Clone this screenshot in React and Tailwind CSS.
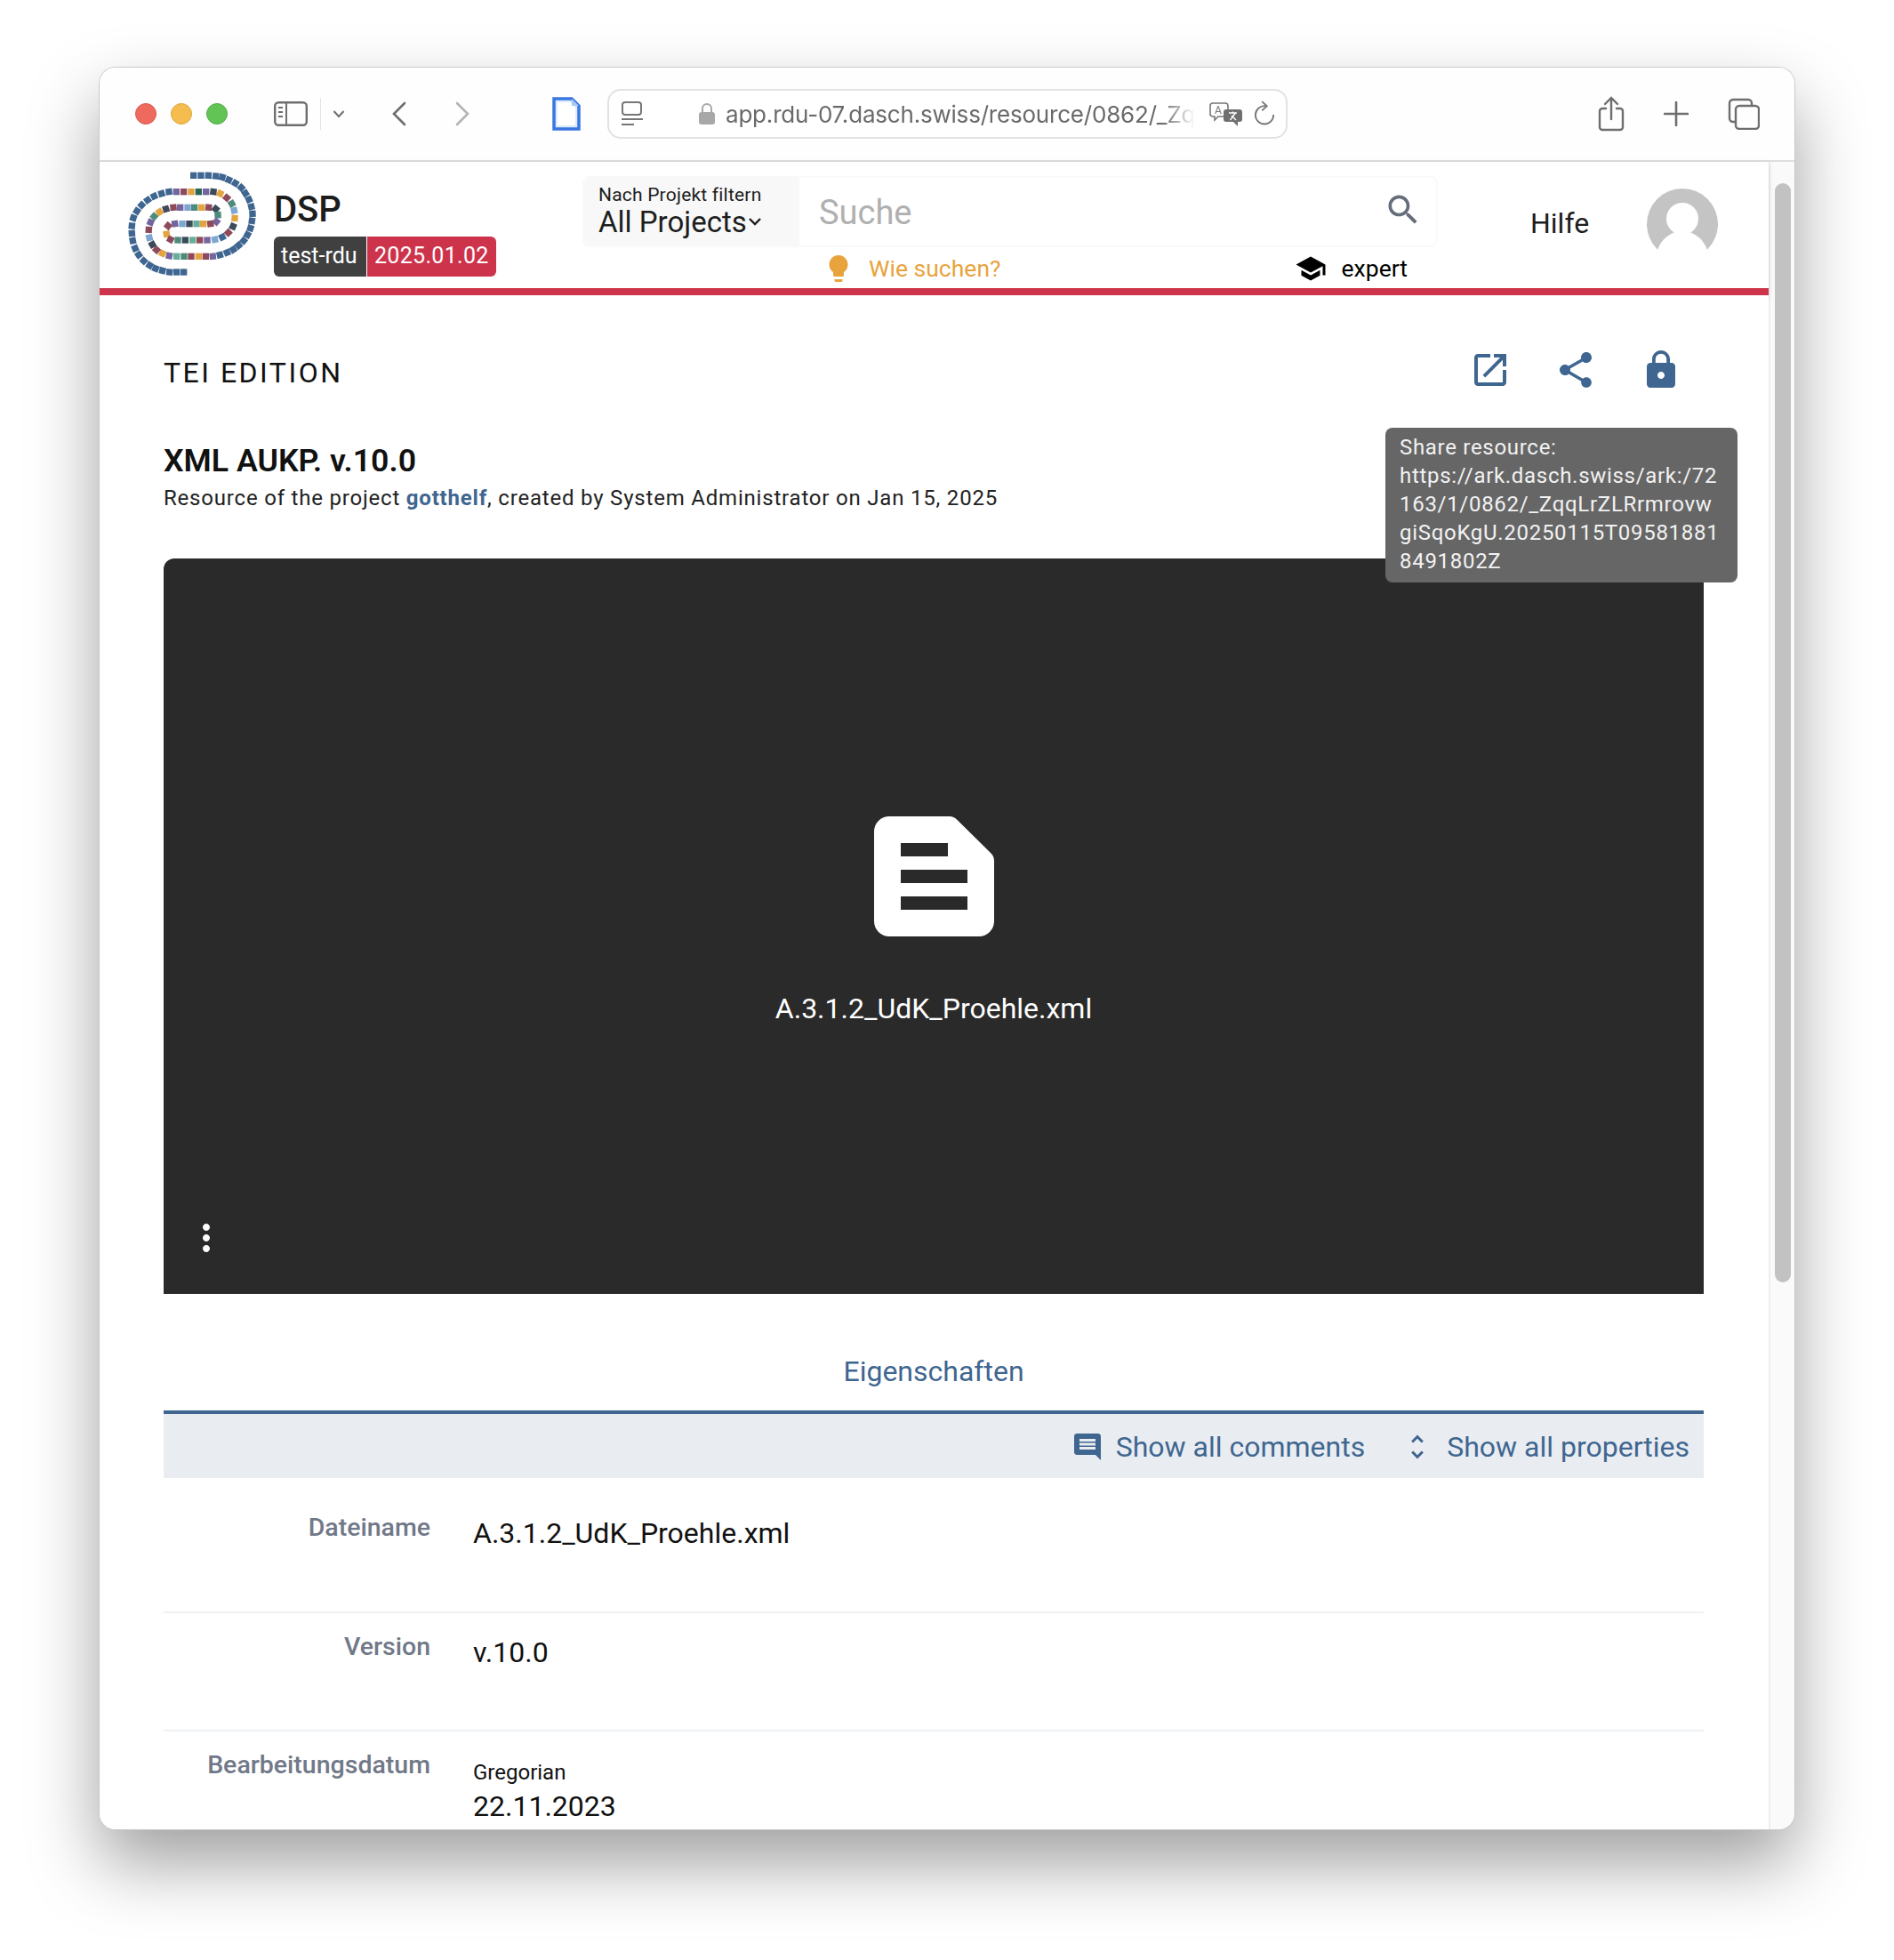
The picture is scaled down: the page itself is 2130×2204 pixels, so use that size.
import React from "react";

const B = "#3f6690", P = "#75659e", M = "#8e4a5a", A = "#e3a33f", G = "#2a6655", T = "#4d8a7b", L = "#7ea6d2", S = "#3c4a5a", F = "#68ac9a";

// squares of the logo, in order along the spiral
const SPIRAL = [
  [263,52,B],[288,52,B],[313,52,B],[338,54,B],[360,58,B],[382,67,B],[404,78,B],[424,93,B],[438,112,B],[450,133,B],[458,157,B],[462,181,B],[460,205,B],[455,230,B],[445,252,B],[432,272,B],[415,288,B],[397,302,B],[376,312,B],[352,320,B],
  [328,325,P],[304,325,M],[280,325,A],[255,325,M],[231,325,T],[206,325,F],[181,323,P],[158,315,A],[138,303,M],[124,285,S],[114,262,L],[112,235,M],[118,210,P],[130,190,T],[148,175,A],[170,165,S],
  [195,160,M],[218,160,P],[243,160,L],[266,160,T],[290,160,A],[314,160,M],[338,165,S],[345,185,T],[340,208,P],[320,215,M],[296,215,A],[273,215,F],[249,215,S],[225,215,L],[200,215,P],[177,222,M],[172,250,A],[185,268,M],
  [210,270,T],[235,270,S],[260,270,F],[284,270,M],[309,270,P],[335,268,L],[360,260,B],[380,245,M],[396,224,S],[402,196,A],[400,170,L],[392,147,T],[375,127,M],[353,113,A],[330,107,S],[305,107,P],[280,107,G],[255,107,A],[230,107,M],[205,107,P],
  [180,107,B],[155,113,B],[130,122,B],[108,135,B],[88,152,B],[72,172,B],[60,195,B],[55,222,B],[55,247,B],[58,272,B],[66,298,B],[78,320,B],[95,340,B],[115,355,B],[135,366,B],[158,373,B],[182,378,B],[206,378,B],[230,378,B],
];

const Logo = () => (
  <svg viewBox="30 30 450 360" className="w-[150px] h-[120px] shrink-0">
    {SPIRAL.map(([x, y, c], i) => {
      const a = SPIRAL[Math.max(i - 1, 0)];
      const b = SPIRAL[Math.min(i + 1, SPIRAL.length - 1)];
      const deg = (Math.atan2(b[1] - a[1], b[0] - a[0]) * 180) / Math.PI;
      return <rect key={i} x={x - 11} y={y - 11} width="22" height="22" fill={c} transform={`rotate(${deg} ${x} ${y})`} />;
    })}
  </svg>
);

const Mat = ({ d, className }) => (
  <svg viewBox="0 0 24 24" fill="currentColor" className={className}><path d={d} /></svg>
);

const ICONS = {
  open: "M19 19H5V5h7V3H5c-1.11 0-2 .9-2 2v14c0 1.1.89 2 2 2h14c1.1 0 2-.9 2-2v-7h-2v7zM14 3v2h3.59l-9.83 9.83 1.41 1.41L19 6.41V10h2V3h-7z",
  share: "M18 16.08c-.76 0-1.44.3-1.96.77L8.91 12.7c.05-.23.09-.46.09-.7s-.04-.47-.09-.7l7.05-4.11c.54.5 1.25.81 2.04.81 1.66 0 3-1.34 3-3s-1.34-3-3-3-3 1.34-3 3c0 .24.04.47.09.7L8.04 9.81C7.5 9.31 6.79 9 6 9c-1.66 0-3 1.34-3 3s1.34 3 3 3c.79 0 1.5-.31 2.04-.81l7.12 4.16c-.05.21-.08.43-.08.65 0 1.61 1.31 2.92 2.92 2.92s2.92-1.31 2.92-2.92-1.31-2.92-2.92-2.92z",
  lock: "M18 8h-1V6c0-2.76-2.24-5-5-5S7 3.24 7 6v2H6c-1.1 0-2 .9-2 2v10c0 1.1.9 2 2 2h12c1.1 0 2-.9 2-2V10c0-1.1-.9-2-2-2zm-6 9c-1.1 0-2-.9-2-2s.9-2 2-2 2 .9 2 2-.9 2-2 2zm3.1-9H8.9V6c0-1.71 1.39-3.1 3.1-3.1 1.71 0 3.1 1.39 3.1 3.1v2z",
  search: "M15.5 14h-.79l-.28-.27C15.41 12.59 16 11.11 16 9.5 16 5.91 13.09 3 9.5 3S3 5.91 3 9.5 5.91 16 9.5 16c1.61 0 3.09-.59 4.23-1.57l.27.28v.79l5 4.99L20.49 19l-4.99-5zm-6 0C7.01 14 5 11.99 5 9.5S7.01 5 9.5 5 14 7.01 14 9.5 11.99 14 9.5 14z",
  bulb: "M9 21c0 .55.45 1 1 1h4c.55 0 1-.45 1-1v-1H9v1zm3-19C8.14 2 5 5.14 5 9c0 2.38 1.19 4.47 3 5.74V17c0 .55.45 1 1 1h6c.55 0 1-.45 1-1v-2.26c1.81-1.27 3-3.36 3-5.74 0-3.86-3.14-7-7-7z",
  school: "M5 13.18v4L12 21l7-3.82v-4L12 17l-7-3.82zM12 3L1 9l11 6 9-4.91V17h2V9L12 3z",
  comment: "M21.99 4c0-1.1-.89-2-1.99-2H4c-1.1 0-2 .9-2 2v12c0 1.1.9 2 2 2h14l4 4-.01-18zM18 14H6v-2h12v2zm0-3H6V9h12v2zm0-3H6V6h12v2z",
  unfold: "M12 5.83L15.17 9l1.41-1.41L12 3 7.41 7.59 8.83 9 12 5.83zm0 12.34L8.83 15l-1.41 1.41L12 21l4.59-4.59L15.17 15 12 18.17z",
  more: "M12 8c1.1 0 2-.9 2-2s-.9-2-2-2-2 .9-2 2 .9 2 2 2zm0 2c-1.1 0-2 .9-2 2s.9 2 2 2 2-.9 2-2-.9-2-2-2zm0 6c-1.1 0-2 .9-2 2s.9 2 2 2 2-.9 2-2-.9-2-2-2z",
};

const Toolbar = () => (
  <div className="h-[106px] shrink-0 flex items-center pl-[40px] bg-[#fefefe] border-b-2 border-[#dedede] text-[#6e6e6e]">
    <div className="flex gap-[16px]">
      <div className="w-[24px] h-[24px] rounded-full bg-[#ee6a5f] border border-[#d9574d]" />
      <div className="w-[24px] h-[24px] rounded-full bg-[#f5bd4f] border border-[#dfa63c]" />
      <div className="w-[24px] h-[24px] rounded-full bg-[#61c454] border border-[#52ad46]" />
    </div>
    <svg viewBox="0 0 38 28" fill="none" stroke="currentColor" strokeWidth="2.4" className="ml-[52px] w-[38px] h-[28px]">
      <rect x="1.2" y="1.2" width="35.6" height="25.600" rx="4" />
      <path d="M14 1v26M5 7h5M5 12h5M5 17h5" strokeWidth="2" />
    </svg>
    <div className="ml-[14px] w-px h-[36px] bg-[#e4e4e4]" />
    <svg viewBox="0 0 14 10" fill="none" stroke="currentColor" strokeWidth="2" className="ml-[13px] w-[14px] h-[10px]"><path d="M1.5 2 7 8l5.500-6" /></svg>
    <svg viewBox="0 0 16 28" fill="none" stroke="currentColor" strokeWidth="2.6" strokeLinecap="round" className="ml-[53px] w-[16px] h-[28px]"><path d="M14 2 2 14l12 12" /></svg>
    <svg viewBox="0 0 16 28" fill="none" stroke="#b4b4b4" strokeWidth="2.6" strokeLinecap="round" className="ml-[55px] w-[16px] h-[28px]"><path d="m2 2 12 12L2 26" /></svg>
    <svg viewBox="0 0 32 38" className="ml-[93px] w-[32px] h-[38px]">
      <path d="M2 2h20l8 8v26H2z" fill="#dcebff" stroke="#3a76e0" strokeWidth="3.500" />
      <path d="M6 6h14l6 6v20H6z" fill="#fff" />
      <path d="M22 2v8h8z" fill="#a9c9f7" />
    </svg>
    <div className="ml-[30px] w-[765px] h-[56px] flex items-center rounded-[15px] border-2 border-[#e2e2e2] bg-white">
      <svg viewBox="0 0 26 28" fill="none" stroke="#777" strokeWidth="2" className="ml-[13px] w-[26px] h-[28px] shrink-0">
        <rect x="2" y="1" width="21" height="14" rx="3" /><path d="M1 20h24M1 26h14" />
      </svg>
      <svg viewBox="0 0 18 24" fill="#a8a8a8" className="ml-[62px] w-[18px] h-[24px] shrink-0">
        <rect x="0" y="10" width="18" height="14" rx="3" />
        <path d="M4 11V6a5 5 0 0 1 10 0v5" fill="none" stroke="#a8a8a8" strokeWidth="2" />
      </svg>
      <div className="ml-[12px] w-[528px] overflow-hidden whitespace-nowrap font-['Inter',sans-serif] text-[26px] text-[#6a6a6a] tracking-[-0.2px] [mask-image:linear-gradient(to_right,black_93%,transparent)]">
        app.rdu-07.dasch.swiss/resource/0862/_Zq
      </div>
      <svg viewBox="0 0 38 27" className="ml-[16px] w-[38px] h-[27px] shrink-0">
        <path d="M4 1h14a3 3 0 0 1 3 3v9a3 3 0 0 1-3 3H10l-4 4v-4H4a3 3 0 0 1-3-3V4a3 3 0 0 1 3-3z" fill="#fff" stroke="#777" strokeWidth="1.600" />
        <text x="6" y="13" fontSize="12" fill="#777" fontFamily="Roboto, sans-serif">A</text>
        <rect x="16" y="8" width="21" height="14" rx="3" fill="#6f6f6f" />
        <path d="M32 22v5l-5-5z" fill="#6f6f6f" />
        <path d="M22 12h9M26.500 10.500v2M23.500 20l5.500-7.500M30 20l-5-5" stroke="#fff" strokeWidth="1.400" fill="none" />
      </svg>
      <svg viewBox="0 0 26 32" fill="none" stroke="#777" strokeWidth="2" className="ml-[12px] w-[24px] h-[30px] shrink-0">
        <path d="M14 6.500A11 11 0 1 0 24 17" /><path d="m10 1 6 5.500-6 5.500" />
      </svg>
    </div>
    <svg viewBox="0 0 30 40" fill="none" stroke="currentColor" strokeWidth="2.400" strokeLinecap="round" className="ml-[349px] w-[30px] h-[40px]">
      <path d="M9 14H5a3 3 0 0 0-3 3v18a3 3 0 0 0 3 3h20a3 3 0 0 0 3-3V17a3 3 0 0 0-3-3h-4M15 26V2M8 9l7-7 7 7" />
    </svg>
    <svg viewBox="0 0 28 28" fill="none" stroke="currentColor" strokeWidth="2.600" strokeLinecap="round" className="ml-[44px] w-[28px] h-[28px]"><path d="M14 1v26M1 14h26" /></svg>
    <svg viewBox="0 0 36 36" fill="none" stroke="currentColor" strokeWidth="2.400" className="ml-[44px] w-[36px] h-[36px]">
      <path d="M8 27H6a4 4 0 0 1-4-4V6a4 4 0 0 1 4-4h17a4 4 0 0 1 4 4v2" />
      <rect x="9" y="9" width="26" height="26" rx="4" />
    </svg>
  </div>
);

const Avatar = () => (
  <svg viewBox="0 0 80 80" className="w-[80px] h-[80px]">
    <circle cx="40" cy="40" r="40" fill="#c4c4c4" />
    <circle cx="40" cy="34" r="18" fill="#fff" />
    <path d="M12 69c4-12 15-21 28-21s24 9 28 21v11H12z" fill="#fff" />
  </svg>
);

const Header = () => (
  <div className="h-[150px] shrink-0 flex items-start border-b-8 border-[#cd344b] shadow-[0_2px_6px_rgba(0,0,0,0.12)] relative bg-white">
    <div className="ml-[28px] mt-[8px]"><Logo /></div>
    <div className="ml-[18px] mt-[32px] w-[250px] shrink-0">
      <div className="text-[40px] leading-[44px] font-medium text-[#1d1d1d]">DSP</div>
      <div className="mt-[8px] flex w-[250px] h-[45px] rounded-[6px] overflow-hidden text-[25px] leading-[44px] text-white whitespace-nowrap">
        <div className="w-[105px] shrink-0 bg-[#404040] pl-[8px] border-r border-white">test-rdu</div>
        <div className="flex-1 bg-[#cd344b] pl-[8px] tracking-[0.3px]">2025.01.02</div>
      </div>
    </div>
    <div className="ml-[97px] mt-[16px] w-[962px]">
      <div className="h-[80px] flex rounded-[8px] border-2 border-[#f9f9f9]">
        <div className="w-[242px] bg-[#f8f8f8] pl-[16px] pt-[6px] rounded-l-[8px]">
          <div className="text-[21px] leading-[26px] tracking-[0.2px] text-[#1d1d1d]">Nach Projekt filtern</div>
          <div className="flex items-center text-[33px] leading-[36px] text-[#1d1d1d]">
            All Projects
            <svg viewBox="0 0 14 10" fill="none" stroke="#1d1d1d" strokeWidth="2.400" className="ml-[1px] mt-[-2px] w-[16px] h-[10px]"><path d="M1 2l6 6 6-6" /></svg>
          </div>
        </div>
        <div className="flex-1 flex items-center pl-[22px] pt-[2px] text-[38px] text-[#b0b0b0]">Suche</div>
        <Mat d={ICONS.search} className="w-[44px] h-[44px] mt-[14px] mr-[15px] text-[#656c7a]" />
      </div>
      <div className="flex items-center h-[42px] mt-[3px]">
        <Mat d={ICONS.bulb} className="ml-[270px] w-[36px] h-[36px] text-[#e8a33d]" />
        <span className="ml-[16px] text-[26.500px] text-[#e8a33d]">Wie suchen?</span>
        <Mat d={ICONS.school} className="ml-[330px] w-[36px] h-[36px] text-black" />
        <span className="ml-[17px] text-[26.500px] text-black">expert</span>
      </div>
    </div>
    <div className="ml-[104px] mt-[47px] text-[32px] leading-[44px] text-[#1d1d1d]">Hilfe</div>
    <div className="ml-[65px] mt-[30px]"><Avatar /></div>
  </div>
);

const Row = ({ label, children, cls }) => (
  <div className={`flex border-b-2 border-[#eef1f4] ${cls}`}>
    <div className="w-[300px] text-right text-[28.500px] font-medium text-[#717888] leading-[36px]">{label}</div>
    <div className="ml-[48px] text-[32px] text-[#111] leading-[40px]">{children}</div>
  </div>
);

const Content = () => (
  <div className="flex-1 overflow-hidden relative bg-white">
    <div className="pl-[72px] pr-[73px]">
      <div className="flex items-center h-[40px] mt-[67px]">
        <div className="text-[32px] tracking-[2.500px] text-[#111]">TEI EDITION</div>
        <div className="ml-auto mb-[6px] flex items-center text-[#3f6690]">
          <Mat d={ICONS.open} className="w-[48px] h-[48px]" />
          <Mat d={ICONS.share} className="ml-[48px] w-[48px] h-[48px]" />
          <Mat d={ICONS.lock} className="ml-[48px] mr-[24px] w-[48px] h-[48px]" />
        </div>
      </div>
      <div className="mt-[57px] text-[35.700px] leading-[44px] font-semibold text-[#111]">XML AUKP. v.10.0</div>
      <div className="mt-[4px] text-[24px] leading-[32px] tracking-[0.8px] text-[#222]">
        Resource of the project <span className="font-bold text-[#3f6690]">gotthelf</span>, created by System Administrator on Jan 15, 2025
      </div>
      <div className="mt-[52px] h-[827px] bg-[#2a2a2a] rounded-t-[12px] flex flex-col items-center relative">
        <svg viewBox="0 0 135 135" className="mt-[290px] w-[135px] h-[135px]">
          <path fillRule="evenodd" fill="#fff" d="M17 0H85a12 12 0 0 1 8 3.500L131 41a12 12 0 0 1 4 9V118a17 17 0 0 1-17 17H17A17 17 0 0 1 0 118V17A17 17 0 0 1 17 0ZM30 30V45H83V30ZM30 60V75H105V60ZM30 90V105H105V90Z" />
        </svg>
        <div className="mt-[61px] text-[32px] leading-[40px] text-white">A.3.1.2_UdK_Proehle.xml</div>
        <div className="absolute left-[24px] bottom-[39px] text-white"><Mat d={ICONS.more} className="w-[48px] h-[48px]" /></div>
      </div>
      <div className="h-[135px] flex items-end justify-center border-b-4 border-[#3f6690] pb-[22px] text-[32px] leading-[44px] text-[#3f6690]">Eigenschaften</div>
      <div className="h-[72px] bg-[#e9edf2] flex items-center justify-end pr-[16px] pt-[2px] text-[32px] text-[#3f6690]">
        <Mat d={ICONS.comment} className="w-[36px] h-[36px]" />
        <span className="ml-[14px]">Show all comments</span>
        <Mat d={ICONS.unfold} className="ml-[41px] w-[36px] h-[36px]" />
        <span className="ml-[15px]">Show all properties</span>
      </div>
      <Row label="Dateiname" cls="pt-[38px] h-[152px]"><span className="relative top-[4px]">A.3.1.2_UdK_Proehle.xml</span></Row>
      <Row label="Version" cls="pt-[20px] h-[133px]"><span className="relative top-[4px]">v.10.0</span></Row>
      <div className="flex pt-[20px]">
        <div className="w-[300px] text-right text-[28.500px] font-medium text-[#717888] leading-[36px]">Bearbeitungsdatum</div>
        <div className="ml-[48px] text-[#111]">
          <div className="mt-[10px] text-[24px] leading-[32px]">Gregorian</div>
          <div className="mt-[2px] text-[32px] leading-[40px]">22.11.2023</div>
        </div>
      </div>
    </div>
    <div className="absolute left-[1446px] top-[149px] w-[396px] h-[174px] rounded-[8px] bg-[#666666] px-[16px] pt-[6px] text-[24px] leading-[32px] tracking-[0.7px] text-[#f2f2f2] whitespace-nowrap">
      Share resource:
      <br />https://ark.dasch.swiss/ark:/72
      <br />163/1/0862/_ZqqLrZLRrmrovw
      <br />giSqoKgU.20250115T09581881
      <br />8491802Z
    </div>
  </div>
);

export default function App() {
  return (
    <div className="w-[2130px] h-[2204px] bg-white pt-[76px] pl-[112px] font-['Roboto',sans-serif] overflow-hidden">
      <div className="w-[1906px] h-[1981px] rounded-[18px] overflow-hidden flex flex-col bg-white shadow-[0_0_0_1px_#c9c9c9,0_38px_80px_rgba(0,0,0,0.38)]">
        <Toolbar />
        <div className="flex-1 flex min-h-0">
          <div className="flex-1 min-w-0 flex flex-col">
            <Header />
            <Content />
          </div>
          <div className="w-[29px] shrink-0 bg-[#fafafa] border-l-2 border-[#eeeeee] pt-[24px] pl-[5px]">
            <div className="w-[18px] h-[1236px] rounded-full bg-[#c2c2c2]" />
          </div>
        </div>
      </div>
    </div>
  );
}
